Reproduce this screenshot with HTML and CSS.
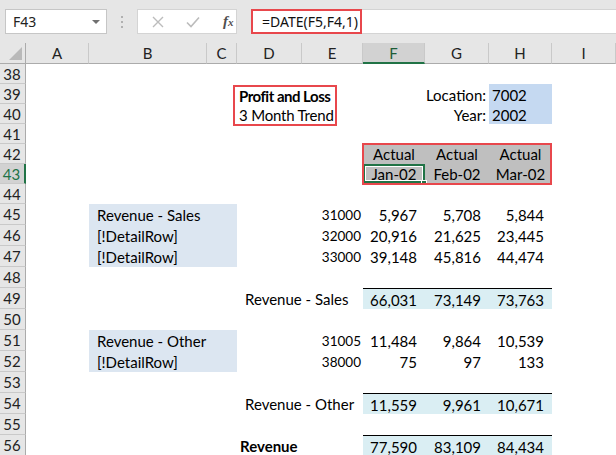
FILE: index.html
```html
<!DOCTYPE html>
<html>
<head>
<meta charset="utf-8">
<link rel="stylesheet" href="styles.css">
</head>
<body>
<div class="toolbar">
  <div class="namebox"><span class="nb-text">F43</span><span class="nb-arrow"></span></div>
  <div class="grip"><i></i><i></i><i></i></div>
  <div class="fxbox">
    <svg class="ico" width="12" height="12" viewBox="0 0 12 12"><path d="M1 1 L11 11 M11 1 L1 11" stroke="#bcbcbc" stroke-width="1.4" fill="none"/></svg>
    <svg class="ico" width="14" height="12" viewBox="0 0 14 12"><path d="M1 6.5 L5 10.5 L13 1.5" stroke="#bcbcbc" stroke-width="1.6" fill="none"/></svg>
    <span class="fx">f<span class="fx-x">x</span></span>
  </div>
  <div class="formula"><span class="formula-text">=DATE(F5,F4,1)</span></div>
</div>

<div class="sheet">
  <div class="corner"><svg width="13" height="13" viewBox="0 0 13 13"><polygon points="13,0 13,13 0,13" fill="#b9b9b9"/></svg></div>
  <div class="ch cA">A</div>
  <div class="ch cB">B</div>
  <div class="ch cC">C</div>
  <div class="ch cD">D</div>
  <div class="ch cE">E</div>
  <div class="ch cF sel">F</div>
  <div class="ch cG">G</div>
  <div class="ch cH">H</div>
  <div class="ch cI">I</div>

  <div class="rh r38">38</div>
  <div class="rh r39">39</div>
  <div class="rh r40">40</div>
  <div class="rh r41">41</div>
  <div class="rh r42">42</div>
  <div class="rh r43 sel">43</div>
  <div class="rh r44">44</div>
  <div class="rh r45">45</div>
  <div class="rh r46">46</div>
  <div class="rh r47">47</div>
  <div class="rh r48">48</div>
  <div class="rh r49">49</div>
  <div class="rh r50">50</div>
  <div class="rh r51">51</div>
  <div class="rh r52">52</div>
  <div class="rh r53">53</div>
  <div class="rh r54">54</div>
  <div class="rh r55">55</div>
  <div class="rh r56">56</div>

  <!-- Title block -->
  <div class="title-area">
    <div class="title-box">
      <div class="line bold">Profit and Loss</div>
      <div class="line">3 Month Trend</div>
    </div>
  </div>

  <div class="cell cG r39 right">Location:</div>
  <div class="cell cG r40 right">Year:</div>
  <div class="cell cH r39 param">7002</div>
  <div class="cell cH r40 param">2002</div>

  <!-- Header band -->
  <div class="cell cF r42 band center">Actual</div>
  <div class="cell cG r42 band center">Actual</div>
  <div class="cell cH r42 band center">Actual</div>
  <div class="cell cF r43 band center">Jan-02</div>
  <div class="cell cG r43 band center">Feb-02</div>
  <div class="cell cH r43 band center">Mar-02</div>
  <div class="selection"><span class="handle"></span></div>
  <div class="band-box"></div>

  <!-- Revenue - Sales -->
  <div class="cell cBC r45 label">Revenue - Sales</div>
  <div class="cell cBC r46 label">[!DetailRow]</div>
  <div class="cell cBC r47 label">[!DetailRow]</div>
  <div class="cell cE r45 acct">31000</div>
  <div class="cell cE r46 acct">32000</div>
  <div class="cell cE r47 acct">33000</div>
  <div class="cell cF r45 num">5,967</div>
  <div class="cell cG r45 num">5,708</div>
  <div class="cell cH r45 num">5,844</div>
  <div class="cell cF r46 num">20,916</div>
  <div class="cell cG r46 num">21,625</div>
  <div class="cell cH r46 num">23,445</div>
  <div class="cell cF r47 num">39,148</div>
  <div class="cell cG r47 num">45,816</div>
  <div class="cell cH r47 num">44,474</div>

  <div class="cell cDE r49 sublabel">Revenue - Sales</div>
  <div class="cell cF r49 num total">66,031</div>
  <div class="cell cG r49 num total">73,149</div>
  <div class="cell cH r49 num total">73,763</div>

  <!-- Revenue - Other -->
  <div class="cell cBC r51 label">Revenue - Other</div>
  <div class="cell cBC r52 label">[!DetailRow]</div>
  <div class="cell cE r51 acct">31005</div>
  <div class="cell cE r52 acct">38000</div>
  <div class="cell cF r51 num">11,484</div>
  <div class="cell cG r51 num">9,864</div>
  <div class="cell cH r51 num">10,539</div>
  <div class="cell cF r52 num">75</div>
  <div class="cell cG r52 num">97</div>
  <div class="cell cH r52 num">133</div>

  <div class="cell cDE r54 sublabel">Revenue - Other</div>
  <div class="cell cF r54 num total">11,559</div>
  <div class="cell cG r54 num total">9,961</div>
  <div class="cell cH r54 num total">10,671</div>

  <div class="cell cDE r56 grand">Revenue</div>
  <div class="cell cF r56 num total">77,590</div>
  <div class="cell cG r56 num total">83,109</div>
  <div class="cell cH r56 num total">84,434</div>
</div>
</body>
</html>
```

FILE: styles.css
```css
* { box-sizing: border-box; }
html, body { margin: 0; padding: 0; }
body {
  width: 616px;
  height: 455px;
  overflow: hidden;
  background: #ffffff;
  font-family: "Lato", "Open Sans", sans-serif;
  color: #000;
}

/* ---------- formula bar ---------- */
.toolbar {
  height: 43px;
  background: #e6e6e6;
  display: flex;
  align-items: flex-start;
  padding-top: 9px;
  padding-left: 5px;
}
.namebox {
  width: 102px;
  height: 25px;
  background: #fff;
  border: 1px solid #c6c6c6;
  display: flex;
  align-items: center;
  justify-content: space-between;
  padding: 0 6px 0 7px;
  font-family: "Noto Sans", "Open Sans", sans-serif;
  font-size: 14px;
  color: #222;
}
.nb-arrow {
  width: 0; height: 0;
  border-left: 4px solid transparent;
  border-right: 4px solid transparent;
  border-top: 4px solid #707070;
}
.grip {
  width: 30px;
  height: 25px;
  display: flex;
  flex-direction: column;
  align-items: center;
  justify-content: center;
  gap: 3px;
}
.grip i {
  display: block;
  width: 2px; height: 2px;
  background: #b0b0b0;
}
.fxbox {
  width: 100px;
  height: 25px;
  background: #fff;
  border: 1px solid #d4d4d4;
  display: flex;
  align-items: center;
  padding-left: 14px;
  gap: 22px;
}
.ico { display: block; }
.fx {
  font-family: "Liberation Serif", "DejaVu Serif", serif;
  font-style: italic;
  font-weight: bold;
  font-size: 15px;
  color: #505050;
  margin-left: 1px;
}
.fx-x { font-size: 11px; }
.formula {
  margin-left: 14px;
  flex: 1;
  height: 25px;
  background: #fff;
  border-top: 1px solid #d4d4d4;
  border-bottom: 1px solid #d4d4d4;
  display: flex;
}
.formula-text {
  display: inline-flex;
  align-items: center;
  height: 25px;
  margin-top: -1px;
  padding: 0 2px 0 9px;
  border: 2px solid #e8474c;
  font-family: "Noto Sans", "Open Sans", sans-serif;
  font-size: 14px;
  color: #111;
}

/* ---------- grid ---------- */
.sheet {
  display: grid;
  grid-template-columns: 26px 63px 118px 30px 65px 61px 62px 64px 63px 64px;
  grid-template-rows: 21px repeat(7, 20px) repeat(12, 21px);
  font-size: 15px;
}
.corner {
  grid-column: 1;
  grid-row: 1;
  background: #e6e6e6;
  border-right: 1px solid #ababab;
  border-bottom: 1px solid #ababab;
  display: flex;
  align-items: flex-end;
  justify-content: flex-end;
  padding: 0 3px 3px 0;
}
.ch {
  grid-row: 1;
  background: #e6e6e6;
  border-right: 1px solid #c9c9c9;
  border-bottom: 1px solid #ababab;
  text-align: center;
  line-height: 20px;
  font-size: 15px;
  color: #222;
}
.ch.sel {
  background: #d2d2d2;
  border-bottom: 2px solid #217346;
  color: #1d5c38;
}
.rh {
  grid-column: 1;
  background: #e6e6e6;
  border-right: 1px solid #ababab;
  border-bottom: 1px solid #c9c9c9;
  font-size: 15px;
  color: #222;
  display: flex;
  align-items: center;
  justify-content: center;
  padding-right: 1px;
}
.rh.sel {
  background: #d2d2d2;
  border-right: 2px solid #217346;
  color: #217346;
}

.r38 { grid-row: 2; } .r39 { grid-row: 3; } .r40 { grid-row: 4; }
.r41 { grid-row: 5; } .r42 { grid-row: 6; } .r43 { grid-row: 7; }
.r44 { grid-row: 8; } .r45 { grid-row: 9; } .r46 { grid-row: 10; }
.r47 { grid-row: 11; } .r48 { grid-row: 12; } .r49 { grid-row: 13; }
.r50 { grid-row: 14; } .r51 { grid-row: 15; } .r52 { grid-row: 16; }
.r53 { grid-row: 17; } .r54 { grid-row: 18; } .r55 { grid-row: 19; }
.r56 { grid-row: 20; }

.cA { grid-column: 2; }
.cB { grid-column: 3; }
.cC { grid-column: 4; }
.cD { grid-column: 5; }
.cE { grid-column: 6; }
.cF { grid-column: 7; }
.cG { grid-column: 8; }
.cH { grid-column: 9; }
.cI { grid-column: 10; }
.cBC { grid-column: 3 / 5; }
.cDE { grid-column: 5 / 7; }

.cell {
  display: flex;
  align-items: center;
  white-space: nowrap;
  padding-top: 1px;
}
.right { justify-content: flex-end; padding-right: 3px; }
.center { justify-content: center; }
.param { background: #c5d9f1; padding-left: 3px; }
.band { background: #bfbfbf; padding-top: 0; padding-bottom: 1px; }
.label { background: #dce6f1; padding-left: 8px; }
.acct { justify-content: flex-end; padding-right: 2px; font-size: 13.5px; }
.num { justify-content: flex-end; padding-right: 8px; }
.total { background: #daeef3; border-top: 1px solid #000; }
.sublabel { padding-left: 8px; }
.grand { padding-left: 3px; font-weight: bold; }

/* title block with annotation box */
.title-area {
  grid-column: 5 / 7;
  grid-row: 3 / 5;
  display: flex;
  align-items: flex-start;
}
.title-box {
  margin-left: -4px;
  margin-top: 1px;
  width: 104px;
  height: 41px;
  border: 2px solid #e8474c;
  padding: 0 0 0 4px;
}
.title-box .line {
  height: 19px;
  line-height: 19px;
  white-space: nowrap;
  letter-spacing: -0.2px;
}
.title-box .bold { font-weight: bold; letter-spacing: -0.5px; }

/* selection + annotation over band */
.selection {
  grid-column: 7;
  grid-row: 7;
  border: 2px solid #217346;
  position: relative;
  z-index: 2;
  margin-bottom: 1px;
}
.selection::before {
  content: "";
  position: absolute;
  inset: 0;
  border: 1px solid #fff;
}
.handle {
  position: absolute;
  right: -4px;
  bottom: -5px;
  width: 6px;
  height: 6px;
  background: #217346;
  border: 1px solid #fff;
}
.band-box {
  grid-column: 7 / 10;
  grid-row: 6 / 8;
  margin: -1px 0 -1px -1px;
  border: 2px solid #e8474c;
  z-index: 3;
}
```
